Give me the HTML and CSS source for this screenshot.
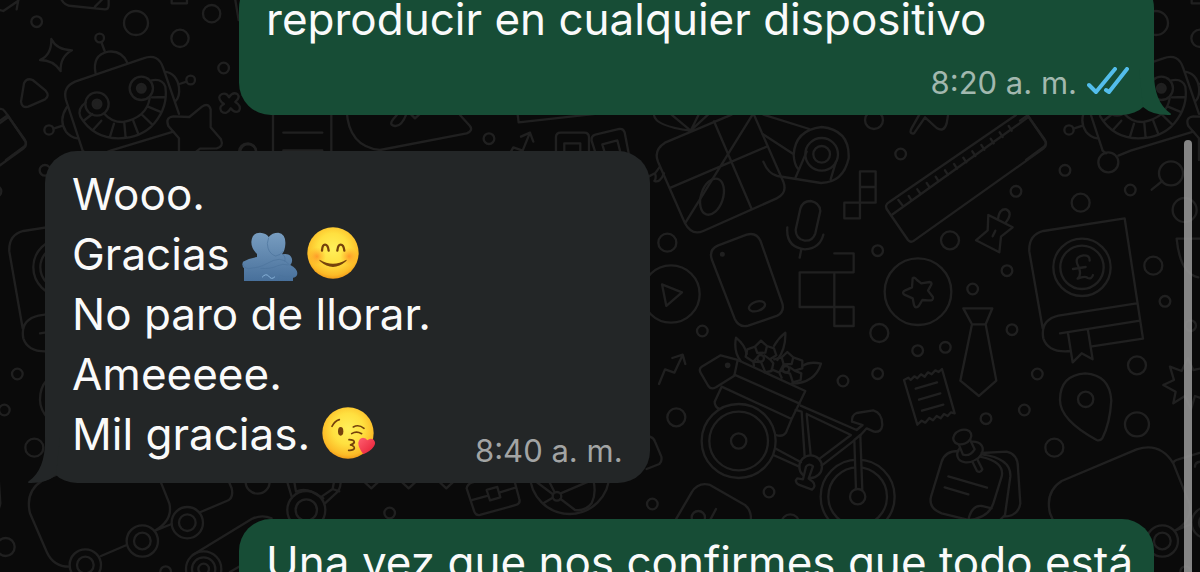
FILE: index.html
```html
<!DOCTYPE html>
<html lang="es">
<head>
    <meta charset="UTF-8">
    <meta name="viewport" content="width=device-width, initial-scale=1.0">
    <title>Chat</title>
    <link rel="stylesheet" href="styles.css">
</head>
<body>
    <svg class="wallpaper" aria-hidden="true">
        <defs>
            <g id="doodles">
                <!-- robot, stars and shapes -->
                <g transform="scale(.3333)">
                    <circle cx="110" cy="65" r="16"/><circle cx="408" cy="69" r="36"/><circle cx="540" cy="115" r="26"/><circle cx="635" cy="41" r="26"/><circle cx="671" cy="204" r="16"/><circle cx="743" cy="456" r="26"/>
                    <path d="M0 30L10 33L55 2M55 0L50 28M185 0Q195 18 215 18L315 28Q326 28 326 15V0M285 20L305 0M515 0V10H561V0M706 0L716 60"/>
                    <path d="M154 117Q170 150 216 151Q180 170 182 213Q160 180 120 180Q155 165 154 117Z"/>
                    <path d="M72 250Q80 232 98 240L137 272Q150 287 135 298L85 320Q65 325 63 305Z"/>
                    <path d="M0 327Q8 325 15 335L75 420Q82 432 72 440L18 480M0 362L20 348"/>
                    <path d="M248 452L198 300Q187 262 225 245L430 175Q475 158 490 205L537 342M287 222Q275 165 325 155Q365 150 382 188M314 153L304 126M200 322Q175 360 198 395Q212 412 232 415M160 386L186 378M495 215Q530 220 537 262Q540 290 527 303M538 252L560 245"/>
                    <circle cx="299" cy="114" r="13"/><circle cx="572" cy="240" r="13"/><circle cx="147" cy="390" r="14"/>
                    <circle cx="291" cy="312" r="35"/><circle cx="424" cy="265" r="35"/>
                    <circle class="solid" cx="291" cy="312" r="13"/><circle class="solid" cx="424" cy="265" r="13"/>
                    <path d="M257 308Q232 325 241 350Q280 415 355 415Q425 415 463 370Q505 320 496 260Q487 235 455 241M313 341Q335 367 370 366Q440 352 449 295M254 360L277 342M279 390L304 362M330 410L342 371M377 413L373 370M415 402L400 363M457 374L427 345M480 335L444 320M494 291L455 292"/>
                    <path d="M248 452L258 460M332 452L520 395M295 467L332 452"/><circle cx="265" cy="487" r="30"/>
                    <path d="M537 480V415L505 378Q495 352 520 349L568 351L606 320Q625 307 632 328V382L663 418Q672 440 650 445L600 446L570 470"/>
                    <path d="M665 307Q650 290 666 282Q680 277 687 292Q698 275 712 282Q722 292 706 306Q726 318 717 333Q704 341 692 325Q680 347 664 334Q655 320 672 312Z"/>
                    <circle cx="453" cy="520" r="36"/><path d="M427 543L395 569"/>
                </g>
                <!-- notebook, plane, photos -->
                <g transform="translate(240 0) scale(.3333)">
                    <path d="M99 330V470M274 330V470M130 398H247M130 451H247M0 455Q5 432 25 432Q45 434 49 455"/>
                    <path d="M320 330Q325 440 420 450L680 400Q700 392 690 378L660 345M500 340Q485 380 465 378Q445 375 460 357L475 340M510 340L525 355L540 342M832 335L836 367L1080 340"/>
                    <circle cx="747" cy="416" r="16"/>
                    <path d="M810 460L820 442L848 452L870 398M843 410L870 398L880 425M948 470V412Q948 398 962 398H1033Q1047 398 1047 412V470M973 470V430H1021V470M1070 470L1055 422Q1053 408 1066 404L1138 387Q1150 385 1154 397L1168 470M1095 460L1087 433L1132 421L1142 460"/>
                </g>
                <!-- ruler and airplane tail -->
                <g transform="translate(840 0) scale(.3333)">
                    <circle cx="102" cy="360" r="27"/><circle cx="182" cy="462" r="16"/><circle cx="675" cy="511" r="16"/><circle cx="528" cy="574" r="16"/><circle cx="871" cy="570" r="16"/>
                    <path d="M240 340L213 388Q208 403 222 400L255 352L290 384Q312 398 320 370L325 340"/>
                    <path d="M562 345L616 424Q622 438 610 446L222 722Q212 730 204 720L142 630Q132 615 148 606L528 345M158 643L567 350M175 600L188 617M206 588L215 602M232 568L242 582M260 549L269 563M287 530L296 544M315 511L324 525M342 492L351 506M370 473L379 487M397 454L406 468M424 435L433 449M452 416L461 430M479 397L488 411M506 378L515 392"/>
                </g>
                <!-- gift, tape, microphone, phone, pixels -->
                <g transform="translate(640 110) scale(.3333)">
                    <circle cx="82" cy="398" r="27"/><circle cx="187" cy="663" r="16"/><circle cx="713" cy="422" r="16"/><circle cx="718" cy="669" r="27"/>
                    <path d="M135 340L54 155Q40 120 75 98L275 14M340 10L430 215Q443 250 410 265L190 363Q155 378 135 340ZM92 233L380 110M222 34L335 297M42 15Q45 48 152 62Q120 35 90 10M152 62L178 10M152 62L208 10"/>
                    <ellipse cx="216" cy="260" rx="33" ry="56" transform="rotate(18 216 260)"/>
                    <path d="M25 200L45 190L60 170M45 190Q50 205 43 213Q60 220 72 190"/>
                    <path d="M370 14L508 57M368 72L460 132M370 155Q385 192 412 198L543 219Q610 218 626 145Q630 60 545 51Q465 60 461 135Q463 165 475 178M467 202L500 125M588 155L572 208"/>
                    <circle cx="545" cy="133" r="49"/><circle cx="545" cy="133" r="25"/>
                    <path d="M481 296Q488 273 512 273Q539 278 541 303L526 370Q518 394 494 392Q468 387 467 360ZM442 352Q437 412 495 418Q540 415 550 374M484 418L479 443"/>
                    <path d="M660 184H707V278H660ZM660 231H707M613 278H660V325H613ZM479 487H583V591H479ZM583 430H641V487H583V591H641V648H583V591"/>
                    <path d="M216 450Q205 420 233 407L320 374Q350 365 362 394L427 580Q434 605 412 617L325 647Q297 654 284 626Z"/>
                    <circle class="solid" cx="247" cy="433" r="4"/><ellipse cx="351" cy="589" rx="25" ry="14" transform="rotate(-18 351 589)"/>
                    <circle cx="93" cy="552" r="86"/><path d="M66 523L126 547L79 588Z"/>
                </g>
                <!-- pin, book, star coin, tie -->
                <g transform="translate(900 180) scale(.3333)">
                    <circle cx="542" cy="68" r="27"/><circle cx="150" cy="181" r="27"/><circle cx="321" cy="272" r="16"/><circle cx="218" cy="327" r="16"/><circle cx="336" cy="449" r="16"/><circle cx="53" cy="512" r="16"/><circle cx="136" cy="502" r="16"/><circle cx="412" cy="582" r="16"/><circle cx="711" cy="556" r="27"/><circle cx="760" cy="257" r="27"/><circle cx="795" cy="364" r="16"/><circle cx="854" cy="90" r="36"/><circle cx="872" cy="437" r="16"/>
                    <path d="M265 105L293 119L338 142L303 170L298 217L228 181L263 151ZM294 117Q298 85 319 88Q340 98 317 128M286 152L278 169"/>
                    <path d="M428 445L388 215Q385 165 430 153L674 115L729 476L576 499M710 370L475 407Q420 420 430 475Q445 520 512 513M720 422L480 460M504 459L518 547L545 520L578 538L564 451"/>
                    <circle cx="546" cy="262" r="86"/><circle cx="546" cy="262" r="65"/>
                    <path d="M569 242Q570 225 550 226Q524 230 532 252Q548 282 533 296Q555 287 563 294Q575 298 579 285M519 267L557 261"/>
                    <circle cx="54" cy="335" r="100"/>
                    <path d="M38 295Q43 290 51 300L64 310L89 306Q99 308 91 319L84 332L99 352Q101 363 85 361L67 360L57 377Q47 388 42 375L38 355L13 344Q4 337 16 331L36 322Z"/>
                    <path d="M190 385H277L257 433H216ZM216 433L181 602L237 648L289 602L257 433"/>
                    <path d="M830 176H930M830 176Q840 280 895 292"/>
                </g>
                <!-- cargo bike with flowers -->
                <g transform="translate(640 330) scale(.3333)">
                    <circle cx="609" cy="153" r="16"/><circle cx="713" cy="131" r="16"/><circle cx="109" cy="262" r="27"/><circle cx="387" cy="486" r="16"/><circle cx="37" cy="522" r="16"/><circle cx="451" cy="580" r="27"/>
                    <path d="M57 162L75 118L103 128L128 75M97 84L128 74L136 102"/>
                    <circle cx="296" cy="333" r="111"/><circle cx="296" cy="333" r="88"/><circle cx="296" cy="333" r="23"/>
                    <circle cx="653" cy="500" r="111"/><circle cx="653" cy="500" r="88"/>
                    <path class="mask" d="M643 330L648 478L667 480L661 315Z"/><circle class="mask" cx="653" cy="500" r="23"/>
                    <path d="M293 90L242 76L185 110Q175 118 183 130L205 168Q213 180 228 172L283 137ZM293 90L496 183L455 267L245 170M283 134L479 221M245 170L224 215Q224 230 237 236M455 267L438 308Q428 322 408 315"/>
                    <circle class="solid" cx="263" cy="106" r="5"/>
                    <path d="M482 227L650 300M467 240L485 245L494 380M500 252L633 315L540 385M500 252L512 375M642 332L545 407M405 355L483 397M400 375L478 410M650 300L668 285L636 275Q635 255 650 249L700 241Q727 248 727 285Q725 308 702 305L680 295L662 315"/>
                    <circle cx="512" cy="410" r="34"/>
                    <path class="mask" d="M498 410Q507 398 519 409L506 446L518 455Q530 468 516 479L476 464Q462 454 472 445L489 448Z"/>
                    <path d="M302 93Q280 65 288 23Q315 45 320 72M402 48Q415 25 436 8Q438 55 412 90M487 108Q510 93 543 101Q525 160 455 161"/>
                    <path d="M345 50L363 32L381 48L376 68L352 69ZM381 48L402 55L409 76L390 88L373 76M345 50L322 58L317 80L340 95L352 83M340 95L342 108M340 95L363 96L374 122M390 88L400 100L395 123L374 127M425 82L442 66L460 82L455 102L431 103ZM460 82L487 92V115L464 122L450 112M425 82L403 88M431 103L418 128L395 118M418 128L425 143M423 122L450 131L458 155M464 122L484 130L482 150L458 157"/>
                    <circle cx="362" cy="85" r="10"/><circle cx="438" cy="118" r="10"/>
                    <path d="M30 320Q42 325 45 335L64 380Q67 395 58 402L20 417M95 590L155 487Q175 455 210 465L315 525Q340 545 330 590M228 537L200 590"/><circle cx="175" cy="563" r="20"/>
                </g>
                <!-- receipt, map pin, sticky notes -->
                <g transform="translate(900 360) scale(.3333)">
                    <circle cx="258" cy="176" r="16"/><circle cx="373" cy="150" r="16"/><circle cx="463" cy="263" r="27"/><circle cx="711" cy="193" r="36"/>
                    <path d="M12 60L25 53L32 60L43 49L52 55L63 43L74 50L84 37L95 43L106 31L116 36L126 27L164 160L153 157L143 168L132 162L122 175L110 168L99 181L88 174L76 188L65 182L52 194ZM47 86L111 67M57 119L121 100M66 152L130 134"/>
                    <path d="M480 120Q480 45 556 40Q630 45 634 122Q630 190 607 235Q600 244 590 240Q480 180 480 120Z"/><circle cx="557" cy="118" r="23"/>
                    <path d="M205 480L125 460Q85 445 93 410L125 305Q135 273 175 273M240 290Q315 305 305 350L280 430Q265 475 205 480Q215 435 245 438L275 445M245 283Q335 295 331 350L315 465L300 480M245 279L320 275Q355 283 354 325L361 430Q355 470 310 470M145 349L261 383M134 382L205 403"/>
                    <ellipse cx="210" cy="276" rx="40" ry="29" transform="rotate(-25 210 276)"/>
                    <path class="mask" d="M175 250L189 284Q210 290 224 268L208 235ZM218 307L231 333Q240 340 247 328L233 300"/>
                    <ellipse class="mask" cx="187" cy="231" rx="28" ry="21" transform="rotate(-22 187 231)"/>
                    <path d="M790 75L822 60L810 20L845 33L864 -5L880 30L920 22M790 75L827 95L820 130L855 108L873 148L885 108L920 120"/>
                </g>
                <!-- truck and trailer -->
                <g transform="translate(0 420) scale(.3333)">
                    <circle cx="17" cy="381" r="27"/><circle cx="773" cy="185" r="36"/><circle cx="497" cy="455" r="16"/>
                    <path d="M208 440Q160 440 140 395L90 280Q75 215 125 183L350 88Q420 65 460 130L508 250Q520 300 465 332M460 130Q460 122 475 118L600 80Q640 70 655 110L695 205Q702 235 680 243L602 276M525 140Q525 125 545 125L570 120M303 408L380 375M465 332L515 312"/>
                    <circle cx="427" cy="363" r="47"/><circle cx="427" cy="363" r="25"/><circle cx="562" cy="308" r="47"/><circle cx="562" cy="308" r="25"/><circle cx="256" cy="435" r="47"/><circle cx="256" cy="435" r="25"/>
                    <circle cx="611" cy="447" r="53"/><circle cx="611" cy="447" r="35"/><circle cx="611" cy="447" r="16"/>
                    <path d="M578 405L755 297Q785 282 815 295M690 456L740 427"/>
                    <circle cx="919" cy="270" r="57"/><circle cx="919" cy="270" r="32"/>
                    <path d="M860 180L875 230M882 180L888 215Q910 205 935 215L970 235M975 250L1010 218Q1025 205 1022 170M965 230L998 207L1003 180M998 207L1018 214"/>
                </g>
                <!-- briefcase and ball -->
                <g transform="translate(330 420) scale(.3333)">
                    <circle cx="179" cy="279" r="16"/>
                    <path d="M95 178L124 205L153 178M207 178L236 205L265 178M320 178L349 205L378 178M410 205Q412 193 425 188L545 155M410 205L433 275Q438 288 450 285L558 255Q572 250 568 237L550 170M428 240L472 228M510 217L556 203M470 210L502 201L511 232L480 241Z"/>
                    <circle cx="719" cy="163" r="119"/><circle cx="681" cy="229" r="13"/>
                    <path d="M605 175L668 222M674 217L655 180M692 220L775 185M667 234L640 250M692 237L735 270Q765 275 785 250Q800 220 790 180"/>
                </g>
            </g>
        </defs>
        <use href="#doodles"/>
        <use href="#doodles" x="1020"/>
        <use href="#doodles" x="-1020"/>
    </svg>

    <main class="chat">
        <article class="message sent first">
            <p>reproducir en cualquier dispositivo</p>
            <div class="meta">
                <time datetime="08:20">8:20 a. m.</time>
                <svg class="checks" viewBox="0 0 42 28" role="img" aria-label="Leído">
                    <path d="M2 18L9 25L28 2M19 23L22 25L40 2"/>
                </svg>
            </div>
            <svg class="tail" viewBox="0 0 32 46" aria-hidden="true"><path d="M0 0H15Q14 32 31 44Q34 46 29 46Q13 46 4 38Z"/></svg>
        </article>

        <article class="message received">
            <div class="text">
                <p>Wooo.</p>
                <p>Gracias
                    <svg class="emoji hug" viewBox="0 0 168 156" role="img" aria-label="Abrazo">
                        <defs>
                            <linearGradient id="blue" x1="0" y1="0" x2="0" y2="1">
                                <stop offset="0" stop-color="#789dc0"/>
                                <stop offset="1" stop-color="#48709b"/>
                            </linearGradient>
                        </defs>
                        <path fill="url(#blue)" d="M45 75Q28 59 28 39Q30 11 54 11Q73 12 80 24Q90 11 109 11Q132 15 130 46Q129 65 120 76Q143 71 149 87Q153 99 145 108Q165 119 166 132Q166 145 153 146V156H6V118Q-2 109 3 98Q20 88 45 84Z"/>
                        <path fill="none" stroke="#4b729b" stroke-width="2" d="M80 26Q73 45 78 57Q84 76 101 81Q116 79 124 66M3 105Q5 117 20 119Q52 116 72 105Q95 91 112 91Q130 91 143 108M122 76Q132 83 128 98M55 118Q85 121 108 110Q122 103 139 108M112 139Q130 147 158 143M112 141V156"/>
                        <path fill="none" stroke="#88b3da" stroke-width="3" stroke-linecap="round" d="M61 144Q71 132 80 141Q88 154 98 144"/>
                    </svg><svg class="emoji" viewBox="0 0 156 156" role="img" aria-label="Sonrisa">
                        <defs>
                            <radialGradient id="face" cx=".5" cy=".42" r=".6">
                                <stop offset="0" stop-color="#fff05a"/>
                                <stop offset=".5" stop-color="#ffe040"/>
                                <stop offset=".85" stop-color="#fcbb27"/>
                                <stop offset="1" stop-color="#ef9416"/>
                            </radialGradient>
                            <radialGradient id="blush">
                                <stop offset="0" stop-color="#ff7a20" stop-opacity=".65"/>
                                <stop offset="1" stop-color="#ff9a20" stop-opacity="0"/>
                            </radialGradient>
                        </defs>
                        <circle cx="78" cy="78" r="77" fill="url(#face)"/>
                        <circle cx="30" cy="88" r="27" fill="url(#blush)"/><circle cx="126" cy="88" r="27" fill="url(#blush)"/>
                        <path fill="none" stroke="#75420c" stroke-width="7" stroke-linecap="round" d="M45 71Q46 53 54 53Q63 53 65 71M91 71Q93 53 101 53Q110 53 112 71"/>
                        <path fill="#75420c" d="M38 98Q78 122 118 98Q121 99 117 103Q78 137 39 103Q35 98 38 98Z"/>
                    </svg>
                </p>
                <p>No paro de llorar.</p>
                <p>Ameeeee.</p>
                <p>Mil gracias.
                    <svg class="emoji kiss" viewBox="0 0 162 156" role="img" aria-label="Beso">
                        <defs>
                            <linearGradient id="heart" x1="0" y1="0" x2="1" y2="1">
                                <stop offset="0" stop-color="#ff6070"/>
                                <stop offset="1" stop-color="#e51b32"/>
                            </linearGradient>
                        </defs>
                        <circle cx="78" cy="78" r="77" fill="url(#face)"/>
                        <ellipse cx="56" cy="73" rx="8" ry="13" fill="#75420c"/>
                        <path fill="none" stroke="#75420c" stroke-width="5" stroke-linecap="round" d="M30 58Q38 42 52 38M94 60Q110 51 126 64M89 80Q103 71 119 80M81 98Q96 98 97 105Q96 111 84 114Q98 116 97 124Q95 131 80 130"/>
                        <path fill="url(#heart)" d="M124 142Q108 120 109 107Q111 93 123 92Q132 92 136 100Q145 91 155 98Q163 107 156 118Q147 132 124 142Z"/>
                    </svg>
                </p>
            </div>
            <div class="meta"><time datetime="08:40">8:40 a. m.</time></div>
            <svg class="tail" viewBox="0 0 32 46" aria-hidden="true"><path d="M0 0H15Q14 32 31 44Q34 46 29 46Q13 46 4 38Z"/></svg>
        </article>

        <article class="message sent">
            <p>Una vez que nos confirmes que todo está</p>
        </article>
    </main>
    <div class="scrollbar"></div>
</body>
</html>
```
FILE: styles.css
```css
* {
    box-sizing: border-box;
}
body {
    margin: 0;
    height: 100vh;
    overflow: hidden;
    position: relative;
    background-color: #0a0a0a;
    color: #fafafa;
    font-family: Inter, sans-serif;
    font-size: 44px;
    line-height: 60px;
}
p {
    margin: 0;
    white-space: nowrap;
}

/* Wallpaper */
.wallpaper {
    position: absolute;
    inset: 0;
    width: 100%;
    height: 100%;
    fill: none;
    stroke: #202020;
    stroke-width: 7px;
    stroke-linecap: round;
    stroke-linejoin: round;
}
.wallpaper .solid {
    fill: #202020;
}
.wallpaper .mask {
    fill: #0a0a0a;
}

/* Messages */
.chat {
    position: relative;
    display: flex;
    flex-direction: column;
    gap: 36px;
    height: 100%;
    padding: 0 46px 0 45px;
    overflow: hidden;
}
.message {
    position: relative;
    flex-shrink: 0;
    padding: 13px 27px 12px;
    border-radius: 32px;
}
.sent {
    align-self: flex-end;
    width: 82.5%;
    padding-right: 25px;
    background-color: #174d36;
}
.received {
    align-self: flex-start;
    display: flex;
    align-items: flex-end;
    gap: 44px;
    background-color: #232627;
}
.received .text {
    padding-bottom: 7px;
}
.first {
    margin-top: -24px;
}
.meta {
    display: flex;
    justify-content: flex-end;
    align-items: center;
    gap: 10px;
    font-size: 31px;
    line-height: 40px;
    color: #a2a4a4;
    white-space: nowrap;
}
.sent .meta {
    margin-top: 14px;
    color: #a2b8af;
}
.checks {
    width: 42px;
    height: 28px;
    margin-bottom: 4px;
    fill: none;
    stroke: #53bdeb;
    stroke-width: 4px;
    stroke-linecap: round;
    stroke-linejoin: round;
}
.tail {
    position: absolute;
    right: -17px;
    bottom: 0;
    width: 32px;
    height: 46px;
    fill: #174d36;
}
.received .tail {
    right: auto;
    left: -17px;
    transform: scaleX(-1);
    fill: #232627;
}

/* Emoji */
.emoji {
    width: 52px;
    height: 52px;
    vertical-align: -9px;
}
.hug {
    width: 56px;
    margin-right: 9px;
    vertical-align: -11px;
}
.kiss {
    width: 54px;
}

.scrollbar {
    position: absolute;
    top: 140px;
    right: 8px;
    bottom: 0;
    width: 8px;
    border-radius: 4px 4px 0 0;
    background-color: rgba(150, 150, 150, 0.88);
}
```
